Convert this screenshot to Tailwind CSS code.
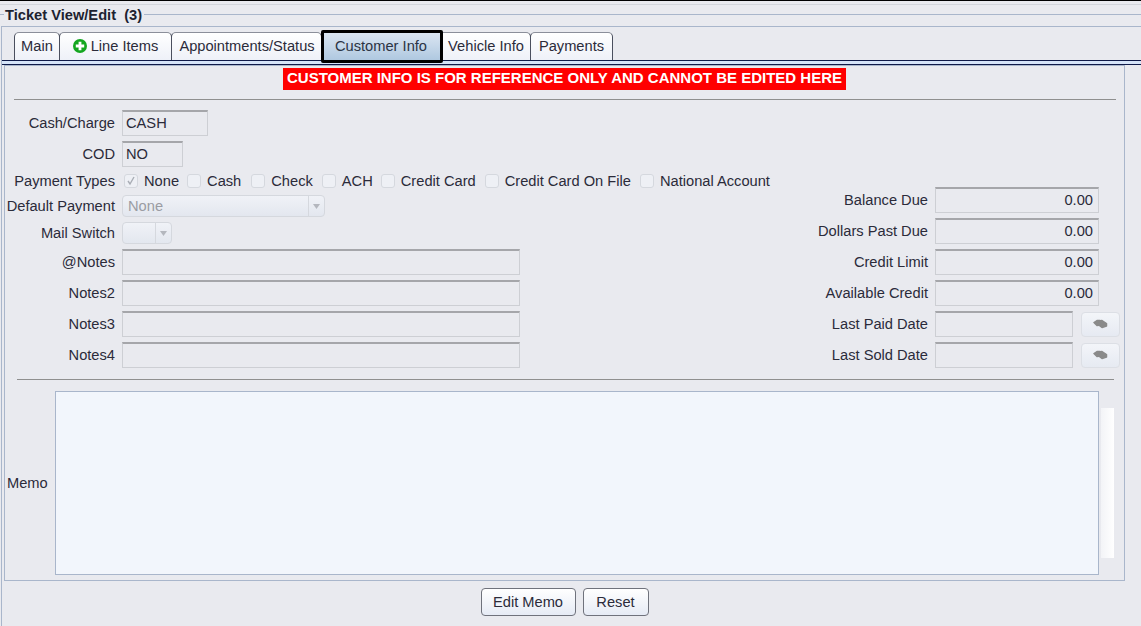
<!DOCTYPE html>
<html lang="en">
<head>
<meta charset="UTF-8">
<title>Ticket View/Edit</title>
<script src="https://cdn.jsdelivr.net/npm/@tailwindcss/browser@4"></script>
</head>
<body class="bg-[#e9eaef]">
<div class="w-[1141px] h-[626px] overflow-hidden font-['Liberation_Sans',Arial,sans-serif] text-[14.67px] text-[#2b2b3a] flex flex-col">
    <!-- top edge -->
    <div class="h-px bg-black"></div>
    <div class="h-px mt-[3px] bg-[#d3d6dc]"></div>

    <!-- titled border -->
    <div class="h-[19px] flex items-center">
        <div class="w-[4px] h-px bg-[#a9b6cb]"></div>
        <span class="px-px text-[14.67px] font-bold whitespace-pre text-[#1d2230]">Ticket View/Edit  (3)</span>
        <div class="flex-1 h-px bg-[#a9b6cb] ml-[1px]"></div>
    </div>

    <div class="h-[2px]"></div>

    <div class="flex-1 ml-px border-l border-t border-[#a9b6cb] flex flex-col pt-[5px]">
        <!-- tabs -->
        <div class="flex h-[28px] pl-[12px] items-stretch">
            <div class="w-[46px] pb-[2px] flex items-center justify-center bg-gradient-to-b from-white to-[#eef1f8] border border-b-0 border-[#4a4f5e] border-t-[#8b8f9a] rounded-t-[5px]">Main</div>
            <div class="w-[113px] pb-[2px] -ml-px flex items-center justify-center gap-[4px] bg-gradient-to-b from-white to-[#eef1f8] border border-b-0 border-[#4a4f5e] border-t-[#8b8f9a] rounded-t-[5px]">
                <svg width="14" height="14" viewBox="0 0 14 14"><circle cx="7" cy="7" r="7" fill="#13a61f"/><path d="M5.6 2.8h2.8v2.8h2.8v2.8H8.4v2.8H5.6V8.4H2.8V5.6h2.8z" fill="#fff"/></svg>
                <span>Line Items</span>
            </div>
            <div class="w-[151px] pb-[2px] pl-px -ml-px flex items-center justify-center bg-gradient-to-b from-white to-[#eef1f8] border border-b-0 border-[#4a4f5e] border-t-[#8b8f9a] rounded-t-[5px]">Appointments/Status</div>
            <div class="w-[122px] h-[33px] pr-[2px] pb-[1px] -mt-[2px] -ml-px flex items-center justify-center bg-gradient-to-b from-[#dbe6f2] to-[#afc8e0] border-[3px] border-black rounded-[2px] text-[#2b3444] relative z-10">Customer Info</div>
            <div class="w-[89px] pb-[2px] -ml-px flex items-center justify-center bg-gradient-to-b from-white to-[#eef1f8] border border-b-0 border-l-0 border-[#4a4f5e] border-t-[#8b8f9a] rounded-tr-[5px]">Vehicle Info</div>
            <div class="w-[83px] pb-[2px] -ml-px flex items-center justify-center bg-gradient-to-b from-white to-[#eef1f8] border border-b-0 border-[#4a4f5e] border-t-[#8b8f9a] rounded-t-[5px]">Payments</div>
        </div>
        <div class="h-[5px] border-y border-[#101a48] bg-[#d6e4f8]"></div>

        <!-- tab panel -->
        <div class="ml-[2px] mr-[16px] h-[516px] border border-t border-[#a9b6cb] px-px flex flex-col">
            <div class="h-[22px] mt-[2px] flex justify-center">
                <div class="bg-[#ff0000] text-white text-[15px] font-bold px-[4px] leading-[20px] whitespace-nowrap">CUSTOMER INFO IS FOR REFERENCE ONLY AND CANNOT BE EDITED HERE</div>
            </div>
            <div class="h-px mt-[9px] ml-[8px] mr-[7px] bg-[#8f8f8f]"></div>

            <div class="flex mt-[10px] h-[258px]">
                <!-- left column -->
                <div class="w-[775px] flex flex-col text-[#2b2b3a]">
                    <div class="h-[26px] flex items-center gap-[7px]">
                        <span class="w-[109px] text-right">Cash/Charge</span>
                        <div class="w-[86px] h-[26px] pl-[3px] leading-[22px] bg-[#e9eaef] border border-[#cdcfd4] border-t-2 border-t-[#a5a6aa]">CASH</div>
                    </div>
                    <div class="h-[26px] mt-[5px] flex items-center gap-[7px]">
                        <span class="w-[109px] text-right">COD</span>
                        <div class="w-[61px] h-[26px] pl-[3px] leading-[22px] bg-[#e9eaef] border border-[#cdcfd4] border-t-2 border-t-[#a5a6aa]">NO</div>
                    </div>
                    <div class="h-[18px] mt-[5px] flex items-center gap-[7px]">
                        <span class="w-[109px] text-right whitespace-nowrap">Payment Types</span>
                        <div class="flex items-center">
                            <span class="w-[14px] h-[14px] mr-[6px] ml-[2px] border border-[#d5d8de] rounded-[3px] bg-[#eef0f5] flex items-center justify-center">
                                <svg width="10" height="10" viewBox="0 0 10 10"><path d="M2 5l2 3 4-7" fill="none" stroke="#a9adb5" stroke-width="1.4"/></svg>
                            </span>
                            <span class="mr-[8px]">None</span>
                            <span class="w-[14px] h-[14px] mr-[6px] border border-[#d5d8de] rounded-[3px] bg-[#eef0f5]"></span>
                            <span class="mr-[10px]">Cash</span>
                            <span class="w-[14px] h-[14px] mr-[6px] border border-[#d5d8de] rounded-[3px] bg-[#eef0f5]"></span>
                            <span class="mr-[9px]">Check</span>
                            <span class="w-[14px] h-[14px] mr-[6px] border border-[#d5d8de] rounded-[3px] bg-[#eef0f5]"></span>
                            <span class="mr-[8px]">ACH</span>
                            <span class="w-[14px] h-[14px] mr-[6px] border border-[#d5d8de] rounded-[3px] bg-[#eef0f5]"></span>
                            <span class="mr-[9px]">Credit Card</span>
                            <span class="w-[14px] h-[14px] mr-[6px] border border-[#d5d8de] rounded-[3px] bg-[#eef0f5]"></span>
                            <span class="mr-[9px]">Credit Card On File</span>
                            <span class="w-[14px] h-[14px] mr-[6px] border border-[#d5d8de] rounded-[3px] bg-[#eef0f5]"></span>
                            <span class="whitespace-nowrap">National Account</span>
                        </div>
                    </div>
                    <div class="h-[22px] mt-[5px] flex items-center gap-[7px]">
                        <span class="w-[109px] text-right whitespace-nowrap">Default Payment</span>
                        <div class="w-[203px] h-[22px] flex items-center justify-between pl-[5px] pr-[3px] bg-gradient-to-b from-[#f0f2f7] to-[#e3e7ef] border border-[#d5d8de] rounded-[4px] text-[#9a9ca3]">
                            <span>None</span>
                            <div class="flex items-center gap-[3px] h-full"><div class="w-px h-full bg-[#d5d8de]"></div><svg width="9" height="7" viewBox="0 0 9 7"><path d="M1 1h7L4.500 6z" fill="#b4b7be"/></svg></div>
                        </div>
                    </div>
                    <div class="h-[22px] mt-[5px] flex items-center gap-[7px]">
                        <span class="w-[109px] text-right">Mail Switch</span>
                        <div class="w-[50px] h-[22px] flex items-center justify-end pr-[3px] bg-gradient-to-b from-[#f0f2f7] to-[#e3e7ef] border border-[#d5d8de] rounded-[4px]">
                            <div class="flex items-center gap-[3px] h-full"><div class="w-px h-full bg-[#d5d8de]"></div><svg width="9" height="7" viewBox="0 0 9 7"><path d="M1 1h7L4.500 6z" fill="#b4b7be"/></svg></div>
                        </div>
                    </div>
                    <div class="h-[26px] mt-[5px] flex items-center gap-[7px]">
                        <span class="w-[109px] text-right">@Notes</span>
                        <div class="w-[398px] h-[26px] bg-[#e9eaef] border border-[#cdcfd4] border-t-2 border-t-[#a5a6aa]"></div>
                    </div>
                    <div class="h-[26px] mt-[5px] flex items-center gap-[7px]">
                        <span class="w-[109px] text-right">Notes2</span>
                        <div class="w-[398px] h-[26px] bg-[#e9eaef] border border-[#cdcfd4] border-t-2 border-t-[#a5a6aa]"></div>
                    </div>
                    <div class="h-[26px] mt-[5px] flex items-center gap-[7px]">
                        <span class="w-[109px] text-right">Notes3</span>
                        <div class="w-[398px] h-[26px] bg-[#e9eaef] border border-[#cdcfd4] border-t-2 border-t-[#a5a6aa]"></div>
                    </div>
                    <div class="h-[26px] mt-[5px] flex items-center gap-[7px]">
                        <span class="w-[109px] text-right">Notes4</span>
                        <div class="w-[398px] h-[26px] bg-[#e9eaef] border border-[#cdcfd4] border-t-2 border-t-[#a5a6aa]"></div>
                    </div>
                </div>

                <!-- right column -->
                <div class="flex-1 flex flex-col pt-[77px] pl-[17px]">
                    <div class="h-[26px] flex items-center gap-[7px]">
                        <span class="w-[130px] text-right whitespace-nowrap">Balance Due</span>
                        <div class="w-[164px] h-[26px] pr-[5px] text-right leading-[22px] bg-[#e9eaef] border border-[#cdcfd4] border-t-2 border-t-[#a5a6aa]">0.00</div>
                    </div>
                    <div class="h-[26px] mt-[5px] flex items-center gap-[7px]">
                        <span class="w-[130px] text-right whitespace-nowrap">Dollars Past Due</span>
                        <div class="w-[164px] h-[26px] pr-[5px] text-right leading-[22px] bg-[#e9eaef] border border-[#cdcfd4] border-t-2 border-t-[#a5a6aa]">0.00</div>
                    </div>
                    <div class="h-[26px] mt-[5px] flex items-center gap-[7px]">
                        <span class="w-[130px] text-right whitespace-nowrap">Credit Limit</span>
                        <div class="w-[164px] h-[26px] pr-[5px] text-right leading-[22px] bg-[#e9eaef] border border-[#cdcfd4] border-t-2 border-t-[#a5a6aa]">0.00</div>
                    </div>
                    <div class="h-[26px] mt-[5px] flex items-center gap-[7px]">
                        <span class="w-[130px] text-right whitespace-nowrap">Available Credit</span>
                        <div class="w-[164px] h-[26px] pr-[5px] text-right leading-[22px] bg-[#e9eaef] border border-[#cdcfd4] border-t-2 border-t-[#a5a6aa]">0.00</div>
                    </div>
                    <div class="h-[26px] mt-[5px] flex items-center gap-[7px]">
                        <span class="w-[130px] text-right whitespace-nowrap">Last Paid Date</span>
                        <div class="w-[138px] h-[26px] bg-[#e9eaef] border border-[#cdcfd4] border-t-2 border-t-[#a5a6aa]"></div>
                        <div class="ml-px w-[39px] h-[25px] flex items-center justify-center bg-gradient-to-b from-[#f3f5f9] to-[#e6eaf2] border border-[#dcdfe5] rounded-[4px]">
                            <svg width="15" height="10" viewBox="0 0 15 10"><g fill="#8a8a8a" stroke="#8a8a8a" stroke-width="1.5" stroke-linejoin="round"><path d="M1 3.500L4 1.500 7 1.500 8 6 4 6.500z"/><path d="M6 2L9 1.500 13.500 4.500 13.500 7 9 8.500 7 7z"/></g></svg>
                        </div>
                    </div>
                    <div class="h-[26px] mt-[5px] flex items-center gap-[7px]">
                        <span class="w-[130px] text-right whitespace-nowrap">Last Sold Date</span>
                        <div class="w-[138px] h-[26px] bg-[#e9eaef] border border-[#cdcfd4] border-t-2 border-t-[#a5a6aa]"></div>
                        <div class="ml-px w-[39px] h-[25px] flex items-center justify-center bg-gradient-to-b from-[#f3f5f9] to-[#e6eaf2] border border-[#dcdfe5] rounded-[4px]">
                            <svg width="15" height="10" viewBox="0 0 15 10"><g fill="#8a8a8a" stroke="#8a8a8a" stroke-width="1.5" stroke-linejoin="round"><path d="M1 3.500L4 1.500 7 1.500 8 6 4 6.500z"/><path d="M6 2L9 1.500 13.500 4.500 13.500 7 9 8.500 7 7z"/></g></svg>
                        </div>
                    </div>
                </div>
            </div>

            <div class="h-px mt-[11px] ml-[11px] mr-[9px] bg-[#8f8f8f]"></div>

            <!-- memo -->
            <div class="flex mt-[11px] h-[184px]">
                <span class="w-[49px] pl-px self-center">Memo</span>
                <div class="w-[1044px] bg-[#f2f6fc] border border-[#a9b6cb]"></div>
                <div class="w-[13px] ml-[2px] mt-[17px] h-[150px] bg-gradient-to-r from-[#f3f4f7] to-white"></div>
            </div>
        </div>

        <!-- bottom buttons -->
        <div class="flex justify-center gap-[7px] mt-[7px] pr-[14px]">
            <div class="w-[95px] h-[28px] flex items-center justify-center bg-gradient-to-b from-white to-[#e6ebf5] border border-[#6f727c] rounded-[4px]">Edit Memo</div>
            <div class="w-[66px] h-[28px] flex items-center justify-center bg-gradient-to-b from-white to-[#e6ebf5] border border-[#6f727c] rounded-[4px]">Reset</div>
        </div>
    </div>
</div>
</body>
</html>
